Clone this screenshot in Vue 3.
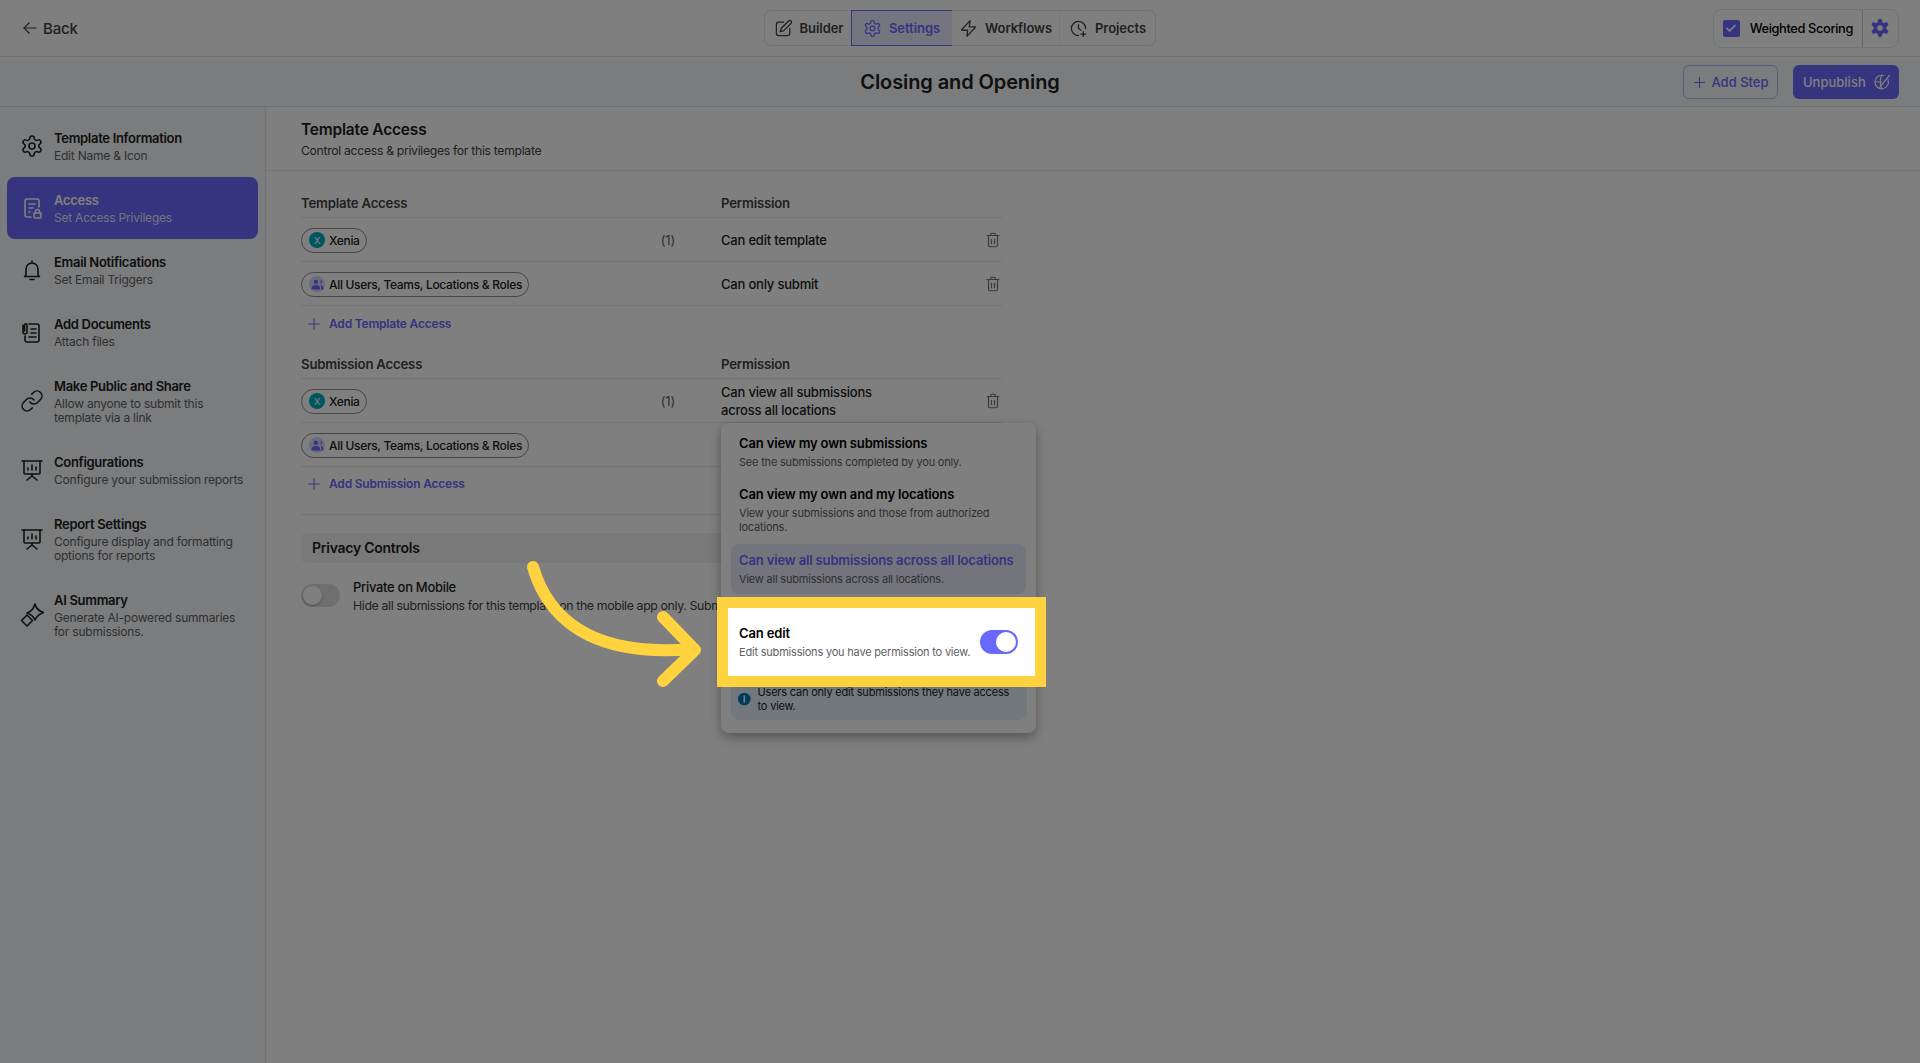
<script setup>
const icons = {
  gear: [
    'M12.22 2h-.44a2 2 0 0 0-2 2v.18a2 2 0 0 1-1 1.73l-.43.25a2 2 0 0 1-2 0l-.15-.08a2 2 0 0 0-2.73.73l-.22.38a2 2 0 0 0 .73 2.73l.15.1a2 2 0 0 1 1 1.72v.51a2 2 0 0 1-1 1.74l-.15.09a2 2 0 0 0-.73 2.73l.22.38a2 2 0 0 0 2.73.73l.15-.08a2 2 0 0 1 2 0l.43.25a2 2 0 0 1 1 1.73V20a2 2 0 0 0 2 2h.44a2 2 0 0 0 2-2v-.18a2 2 0 0 1 1-1.73l.43-.25a2 2 0 0 1 2 0l.15.08a2 2 0 0 0 2.73-.73l.22-.39a2 2 0 0 0-.73-2.73l-.15-.08a2 2 0 0 1-1-1.74v-.5a2 2 0 0 1 1-1.74l.15-.09a2 2 0 0 0 .73-2.73l-.22-.38a2 2 0 0 0-2.73-.73l-.15.08a2 2 0 0 1-2 0l-.43-.25a2 2 0 0 1-1-1.73V4a2 2 0 0 0-2-2z',
    'M15 12a3 3 0 1 1-6 0 3 3 0 0 1 6 0z',
  ],
  edit: ['M12 4H6a3 3 0 0 0-3 3v11a3 3 0 0 0 3 3h11a3 3 0 0 0 3-3v-6', 'M18.4 2.600a2 2 0 0 1 3 3L12 15l-4 1 1-4z'],
  bolt: ['M14 2 3.500 13.200a.6.6 0 0 0 .5 1H11l-1 7.800 10.500-11.200a.6.6 0 0 0-.5-1H13z'],
  clock: ['M21 12a9 9 0 1 0-9 9', 'M12 7v5l3 2', 'M18 16v6M15 19h6'],
  bell: ['M18 17v-6a6 6 0 0 0-12 0v6l-1.500 1.500h15z', 'M10 21.500h4', 'M12 5V3'],
  docLock: [
    'M11 21H7a2 2 0 0 1-2-2V5a2 2 0 0 1 2-2h10a2 2 0 0 1 2 2v6',
    'M9 8h6M9 12h4M9 16h1',
    'M14 17h7v4a1 1 0 0 1-1 1h-5a1 1 0 0 1-1-1z',
    'M15.500 17v-1.500a2 2 0 0 1 4 0V17',
  ],
  docClip: [
    'M9 4h8a2 2 0 0 1 2 2v14a2 2 0 0 1-2 2H7a2 2 0 0 1-2-2v-4',
    'M3 5v7a2 2 0 0 0 4 0V5a1.200 1.200 0 0 0-2.400 0v6',
    'M11 9h5M11 13h5M9 17h7',
  ],
  link: [
    'M10 13a5 5 0 0 0 7.540.54l3-3a5 5 0 0 0-7.070-7.070l-1.720 1.710',
    'M14 11a5 5 0 0 0-7.540-.54l-3 3a5 5 0 0 0 7.070 7.070l1.710-1.710',
  ],
  board: ['M2 3h20', 'M4 3v12a1 1 0 0 0 1 1h14a1 1 0 0 0 1-1V3', 'M12 16v2', 'M7 22l5-4 5 4', 'M8 12v-2M12 12V7M16 12V9'],
  spark: [
    'M15 1Q16 7 23.500 9.500 17 12 15 17 13 12 7 10 13 8 15 1z',
    'M7 12 12.500 17.500 7 23 1.500 17.500z',
  ],
  trash: ['M4 6h16', 'M9 6V4a1 1 0 0 1 1-1h4a1 1 0 0 1 1 1v2', 'M6 6v13a2 2 0 0 0 2 2h8a2 2 0 0 0 2-2V6', 'M10 11v6M14 11v6'],
  plus: ['M12 4v16M4 12h16'],
  back: ['M20 12H4', 'M11 5l-7 7 7 7'],
  globe: ['M20 9a9 9 0 1 1-6-5.600', 'M12 3c-3 3-3 15 0 18M3 12h8', 'M22 3 9 19'],
}

const menu = [
  { title: 'Template Information', sub: ['Edit Name & Icon'], icon: 'gear' },
  { title: 'Access', sub: ['Set Access Privileges'], icon: 'docLock', active: true },
  { title: 'Email Notifications', sub: ['Set Email Triggers'], icon: 'bell' },
  { title: 'Add Documents', sub: ['Attach files'], icon: 'docClip' },
  { title: 'Make Public and Share', sub: ['Allow anyone to submit this', 'template via a link'], icon: 'link' },
  { title: 'Configurations', sub: ['Configure your submission reports'], icon: 'board' },
  { title: 'Report Settings', sub: ['Configure display and formatting', 'options for reports'], icon: 'board' },
  { title: 'AI Summary', sub: ['Generate AI-powered summaries', 'for submissions.'], icon: 'spark' },
]

const tabs = [
  { label: 'Builder', icon: 'edit' },
  { label: 'Settings', icon: 'gear', active: true },
  { label: 'Workflows', icon: 'bolt' },
  { label: 'Projects', icon: 'clock' },
]

const templateRows = [
  { name: 'Xenia', count: '(1)', perm: ['Can edit template'] },
  { name: 'All Users, Teams, Locations & Roles', group: true, perm: ['Can only submit'] },
]

const submissionRows = [
  { name: 'Xenia', count: '(1)', perm: ['Can view all submissions', 'across all locations'] },
  { name: 'All Users, Teams, Locations & Roles', group: true, perm: [] },
]

const sections = [
  { title: 'Template Access', rows: templateRows, add: 'Add Template Access' },
  { title: 'Submission Access', rows: submissionRows, add: 'Add Submission Access', last: true },
]
</script>

<template>
  <div class="page">
    <header class="topbar">
      <div class="back">
        <svg class="ico" width="18" height="18" viewBox="0 0 24 24"><path v-for="d in icons.back" :key="d" :d="d" /></svg>
        <span>Back</span>
      </div>
      <nav class="tabs">
        <div v-for="t in tabs" :key="t.label" class="tab" :class="{ active: t.active }">
          <svg class="ico" width="19" height="19" viewBox="0 0 24 24"><path v-for="d in icons[t.icon]" :key="d" :d="d" /></svg>
          <span>{{ t.label }}</span>
        </div>
      </nav>
      <div class="scoring">
        <span class="check">
          <svg width="14" height="14" viewBox="0 0 24 24" fill="none" stroke="#fff" stroke-width="3" stroke-linecap="round" stroke-linejoin="round"><path d="M5 12.500l4.500 4.500L19 7.500" /></svg>
        </span>
        <span class="scoring-label">Weighted Scoring</span>
        <span class="scoring-gear">
          <svg width="22" height="22" viewBox="0 0 24 24" fill="currentColor"><path fill-rule="evenodd" :d="icons.gear.join(' ')" /></svg>
        </span>
      </div>
    </header>

    <div class="titlebar">
      <h1>Closing and Opening</h1>
      <div class="title-actions">
        <button class="btn-outline" type="button">
          <svg class="ico" width="15" height="15" viewBox="0 0 24 24"><path :d="icons.plus[0]" /></svg>
          Add Step
        </button>
        <button class="btn-solid" type="button">
          Unpublish
          <svg class="ico" width="18" height="18" viewBox="0 0 24 24"><path v-for="d in icons.globe" :key="d" :d="d" /></svg>
        </button>
      </div>
    </div>

    <div class="main">
      <aside class="sidebar">
        <div v-for="m in menu" :key="m.title" class="menu-item" :class="{ active: m.active, tall: m.sub.length > 1 }">
          <svg class="ico menu-ico" width="24" height="24" viewBox="0 0 24 24"><path v-for="d in icons[m.icon]" :key="d" :d="d" /></svg>
          <div>
            <div class="menu-title">{{ m.title }}</div>
            <div v-for="s in m.sub" :key="s" class="menu-sub">{{ s }}</div>
          </div>
        </div>
      </aside>

      <section class="content">
        <div class="content-head">
          <h2>Template Access</h2>
          <p>Control access &amp; privileges for this template</p>
        </div>

        <div class="tables">
          <div v-for="sec in sections" :key="sec.title" class="access">
            <div class="row head">
              <span class="col-name">{{ sec.title }}</span>
              <span class="col-perm">Permission</span>
            </div>
            <div v-for="r in sec.rows" :key="r.name" class="row">
              <div class="col-name">
                <span class="chip">
                  <span v-if="r.group" class="avatar group">
                    <svg width="13" height="13" viewBox="0 0 24 24" fill="currentColor"><path d="M9 3a4 4 0 1 1 0 8 4 4 0 0 1 0-8zM1 20c0-4 3-7 8-7s8 3 8 7v1H1zM17 3.500a3.500 3.500 0 0 1 0 7 5.500 5.500 0 0 0 0-7zM18 13c3 .5 5 3 5 6v2h-4v-2c0-2-.3-4-1-6z" /></svg>
                  </span>
                  <span v-else class="avatar">X</span>
                  {{ r.name }}
                </span>
                <span v-if="r.count" class="count">{{ r.count }}</span>
              </div>
              <div class="col-perm perm">
                <div v-for="p in r.perm" :key="p">{{ p }}</div>
              </div>
              <svg v-if="r.perm.length" class="ico trash" width="18" height="18" viewBox="0 0 24 24"><path v-for="d in icons.trash" :key="d" :d="d" /></svg>
            </div>
            <div class="add-row" :class="{ last: sec.last }">
              <svg class="ico" width="16" height="16" viewBox="0 0 24 24"><path :d="icons.plus[0]" /></svg>
              <span>{{ sec.add }}</span>
            </div>
          </div>

          <div class="privacy-band">Privacy Controls</div>
          <div class="privacy-row">
            <span class="switch-off"><span></span></span>
            <div>
              <div class="privacy-title">Private on Mobile</div>
              <div class="privacy-sub">Hide all submissions for this template on the mobile app only. Submissions stay visible on the web.</div>
            </div>
          </div>
        </div>
      </section>
    </div>

    <div class="popup">
      <div class="opt">
        <div class="opt-title">Can view my own submissions</div>
        <div class="opt-sub">See the submissions completed by you only.</div>
      </div>
      <div class="opt">
        <div class="opt-title">Can view my own and my locations</div>
        <div class="opt-sub">View your submissions and those from authorized locations.</div>
      </div>
      <div class="opt selected">
        <div class="opt-title">Can view all submissions across all locations</div>
        <div class="opt-sub">View all submissions across all locations.</div>
      </div>
      <div class="spotlight">
        <div>
          <div class="opt-title">Can edit</div>
          <div class="opt-sub">Edit submissions you have permission to view.</div>
        </div>
        <span class="switch-on"><span></span></span>
      </div>
      <div class="info">
        <svg width="14" height="14" viewBox="0 0 24 24"><circle cx="12" cy="12" r="12" fill="#0277bd" /><path d="M12 10.500v7M12 6.500v1.500" stroke="#fff" stroke-width="3" stroke-linecap="round" /></svg>
        <span>Users can only edit submissions they have access to view.</span>
      </div>
    </div>

    <div class="dim"></div>

    <svg class="arrow" width="1920" height="1063" viewBox="0 0 1920 1063" fill="none" stroke="#ffd23f" stroke-width="12" stroke-linecap="round" stroke-linejoin="round">
      <path d="M533 567C552 632 610 656 692 649" />
      <path d="M663 617 695 650 663 681" />
    </svg>
  </div>
</template>

<style>
html,
body {
  margin: 0;
  background: #fff;
}
</style>

<style scoped>
.page {
  position: relative;
  width: 100%;
  height: 100vh;
  overflow: hidden;
  display: flex;
  flex-direction: column;
  background: #fff;
  color: #212121;
  font-family: Inter, "Noto Sans", sans-serif;
  letter-spacing: -0.2px;
}
.ico {
  fill: none;
  stroke: currentColor;
  stroke-width: 1.6;
  stroke-linecap: round;
  stroke-linejoin: round;
  flex: none;
}

/* top bar */
.topbar {
  position: relative;
  height: 57px;
  flex: none;
  box-sizing: border-box;
  border-bottom: 1px solid #dfe1e4;
  display: flex;
  align-items: center;
  justify-content: space-between;
  padding: 0 21px 0 21px;
}
.back {
  display: flex;
  align-items: center;
  gap: 4px;
  font-size: 15px;
  font-weight: 500;
  color: #424242;
}
.tabs {
  position: absolute;
  left: 764px;
  top: 10px;
  display: grid;
  grid-template-columns: 87px 99px 108px 96px;
  height: 36px;
  box-sizing: border-box;
  border: 1px solid #e4e6e9;
  border-radius: 6px;
}
.tab {
  display: flex;
  align-items: center;
  justify-content: center;
  gap: 7px;
  font-size: 13px;
  font-weight: 600;
  letter-spacing: -0.05px;
  color: #424242;
  border-left: 1px solid #eceef0;
}
.tab:first-child {
  border-left: 0;
}
.tab.active {
  color: #6868fe;
  background: #ebebff;
  box-shadow: 0 0 0 1px #6868fe;
  border-left: 0;
}
.scoring {
  display: flex;
  align-items: center;
  height: 39px;
  box-sizing: border-box;
  border: 1px solid #e4e6e9;
  border-radius: 8px;
  padding-left: 9px;
  font-size: 12.800px;
  font-weight: 500;
}
.check {
  width: 17px;
  height: 17px;
  border-radius: 2px;
  background: #6868fe;
  display: flex;
  align-items: center;
  justify-content: center;
}
.scoring-label {
  margin: 0 9px 0 10px;
  color: #000;
  letter-spacing: -0.35px;
}
.scoring-gear {
  height: 100%;
  width: 36px;
  box-sizing: border-box;
  border-left: 1px solid #c9cbce;
  display: flex;
  align-items: center;
  justify-content: center;
  padding-right: 2px;
  color: #6868fe;
}

/* title bar */
.titlebar {
  height: 50px;
  flex: none;
  box-sizing: border-box;
  background: #f6f8fb;
  border-bottom: 1px solid #dfe1e4;
  display: flex;
  align-items: center;
  justify-content: center;
  position: relative;
}
.titlebar h1 {
  margin: 0;
  font-size: 20px;
  font-weight: 600;
  letter-spacing: -0.1px;
  color: #212121;
}
.title-actions {
  position: absolute;
  right: 21px;
  top: 8px;
  display: flex;
  gap: 15px;
}
.title-actions button {
  height: 34px;
  box-sizing: border-box;
  display: flex;
  align-items: center;
  border-radius: 6px;
  font-family: inherit;
  font-size: 13px;
  font-weight: 500;
  letter-spacing: 0;
  cursor: pointer;
}
.btn-outline {
  width: 95px;
  justify-content: center;
  gap: 4px;
  padding: 0;
  background: transparent;
  border: 1px solid #b9b9fb;
  color: #6868fe;
}
.btn-solid {
  width: 106px;
  padding: 0 8px 0 10px;
  justify-content: space-between;
  background: #6868fe;
  border: 0;
  color: #fff;
}

/* sidebar */
.main {
  flex: 1;
  display: flex;
  min-height: 0;
}
.sidebar {
  width: 266px;
  flex: none;
  box-sizing: border-box;
  padding: 8px 7px 0;
  background: #f6f8fa;
  border-right: 1px solid #e4e6e9;
}
.menu-item {
  height: 62px;
  box-sizing: border-box;
  border-radius: 8px;
  display: flex;
  align-items: center;
  gap: 10px;
  padding-left: 13px;
}
.menu-item.tall {
  height: 76px;
}
.menu-item.active {
  background: #6868fe;
  color: #fff;
}
.menu-ico {
  margin-top: -1px;
}
.menu-title {
  font-size: 13px;
  font-weight: 600;
  line-height: 18px;
  margin-bottom: 2px;
  letter-spacing: -0.3px;
}
.menu-sub {
  font-size: 12px;
  line-height: 14.500px;
  color: #616161;
  letter-spacing: -0.22px;
}
.active .menu-sub {
  color: #e6e6ff;
}

/* content */
.content {
  flex: 1;
  min-width: 0;
}
.content-head {
  height: 64px;
  box-sizing: border-box;
  padding: 13px 0 0 35px;
  border-bottom: 1px solid #e9e9e9;
}
.content-head h2 {
  margin: 0;
  font-size: 15.500px;
  line-height: 20px;
  font-weight: 600;
}
.content-head p {
  margin: 2px 0 0;
  font-size: 12.200px;
  line-height: 18px;
  color: #424242;
  letter-spacing: -0.3px;
}
.tables {
  width: 701px;
  margin-left: 35px;
  padding-top: 18px;
}
.row {
  display: flex;
  align-items: center;
  height: 44px;
  padding-top: 1px;
  box-sizing: border-box;
  border-bottom: 1px solid #e9e9e9;
  position: relative;
  font-size: 13px;
}
.row.head {
  height: 29px;
  padding-top: 0;
  font-weight: 600;
  color: #424242;
  line-height: 18px;
  font-size: 13.200px;
}
.col-name {
  width: 420px;
  flex: none;
  display: flex;
  align-items: center;
  justify-content: space-between;
  padding-right: 46px;
  box-sizing: border-box;
}
.chip {
  display: inline-flex;
  align-items: center;
  gap: 4px;
  height: 25px;
  box-sizing: border-box;
  padding: 0 6px 0 7px;
  border: 1px solid #8c8c8c;
  border-radius: 13px;
  font-size: 12px;
  font-weight: 500;
  color: #212121;
  letter-spacing: -0.32px;
}
.avatar {
  width: 16px;
  height: 16px;
  border-radius: 50%;
  background: #00acc1;
  color: #fff;
  font-size: 9px;
  display: flex;
  align-items: center;
  justify-content: center;
}
.avatar.group {
  background: #d6d6fb;
  color: #6868fe;
}
.count {
  color: #616161;
  font-size: 13px;
}
.perm {
  font-weight: 500;
  color: #212121;
  line-height: 18px;
  letter-spacing: -0.2px;
}
.trash {
  position: absolute;
  right: 0;
  top: 50%;
  margin-top: -9px;
  color: #757575;
}
.add-row {
  height: 35px;
  display: flex;
  align-items: center;
  gap: 7px;
  padding-left: 5px;
  font-size: 12px;
  font-weight: 600;
  color: #6868fe;
  margin-bottom: 9px;
}
.add-row.last {
  height: 48px;
  margin-bottom: 18px;
  border-bottom: 1px solid #e9e9e9;
  align-items: flex-start;
  padding-top: 9px;
  box-sizing: border-box;
}
.privacy-band {
  height: 30px;
  line-height: 30px;
  padding-left: 11px;
  background: #f2f2f2;
  border-radius: 6px;
  font-size: 14px;
  letter-spacing: -0.25px;
  font-weight: 600;
  color: #212121;
}
.privacy-row {
  display: flex;
  gap: 13px;
  margin-top: 15px;
  white-space: nowrap;
}
.switch-off {
  margin-top: 6px;
  width: 39px;
  height: 23px;
  flex: none;
  border-radius: 12px;
  background: #ddd;
  position: relative;
}
.switch-off span {
  position: absolute;
  left: 2px;
  top: 2px;
  width: 19px;
  height: 19px;
  border-radius: 50%;
  background: #fff;
  box-shadow: 0 1px 2px rgba(0, 0, 0, 0.3);
}
.privacy-title {
  font-size: 13px;
  line-height: 18px;
  color: #212121;
  font-weight: 500;
  letter-spacing: -0.3px;
}
.privacy-sub {
  font-size: 12.300px;
  line-height: 18px;
  margin-top: 1px;
  color: #424242;
  letter-spacing: -0.35px;
}

/* dropdown */
.popup {
  position: absolute;
  left: 721px;
  top: 423px;
  width: 315px;
  height: 310px;
  box-sizing: border-box;
  padding: 11px 10px 10px;
  background: #fff;
  border-radius: 8px;
  box-shadow: 0 4px 12px rgba(0, 0, 0, 0.35);
}
.opt {
  padding: 0 8px;
  margin-bottom: 16px;
}
.opt + .opt {
  margin-bottom: 10px;
}
.opt-title {
  font-size: 13px;
  line-height: 18px;
  font-weight: 600;
  color: #000;
  letter-spacing: -0.15px;
}
.opt-sub {
  font-size: 11px;
  line-height: 14px;
  color: #616161;
  margin-top: 3px;
  letter-spacing: -0.2px;
}
.opt.selected {
  height: 50px;
  box-sizing: border-box;
  padding-top: 7px;
  border-radius: 8px;
  background: #e8e8fb;
  margin: 0;
}
.selected .opt-title {
  color: #6868fe;
}
.spotlight {
  position: absolute;
  z-index: 2;
  left: -4px;
  top: 174px;
  width: 329px;
  height: 90px;
  box-sizing: border-box;
  border: 11px solid #ffd23f;
  background: #fff;
  display: flex;
  align-items: center;
  justify-content: space-between;
  padding: 0 17px 2px 11px;
}
.switch-on {
  width: 38px;
  height: 24px;
  margin-top: 2px;
  border-radius: 12px;
  background: #6868fe;
  position: relative;
}
.switch-on span {
  position: absolute;
  right: 2px;
  top: 2px;
  width: 20px;
  height: 20px;
  border-radius: 50%;
  background: #fff;
}
.info {
  position: absolute;
  left: 10px;
  right: 9px;
  top: 255px;
  height: 42px;
  box-sizing: border-box;
  padding: 0 7px;
  display: flex;
  align-items: center;
  gap: 7px;
  background: #e3f2fb;
  border-radius: 8px;
  font-size: 11px;
  line-height: 14px;
  color: #212121;
}

/* annotation layer */
.dim {
  position: absolute;
  inset: 0;
  z-index: 1;
  background: rgba(0, 0, 0, 0.5);
}
.arrow {
  position: absolute;
  left: 0;
  top: 0;
  z-index: 3;
}
</style>
